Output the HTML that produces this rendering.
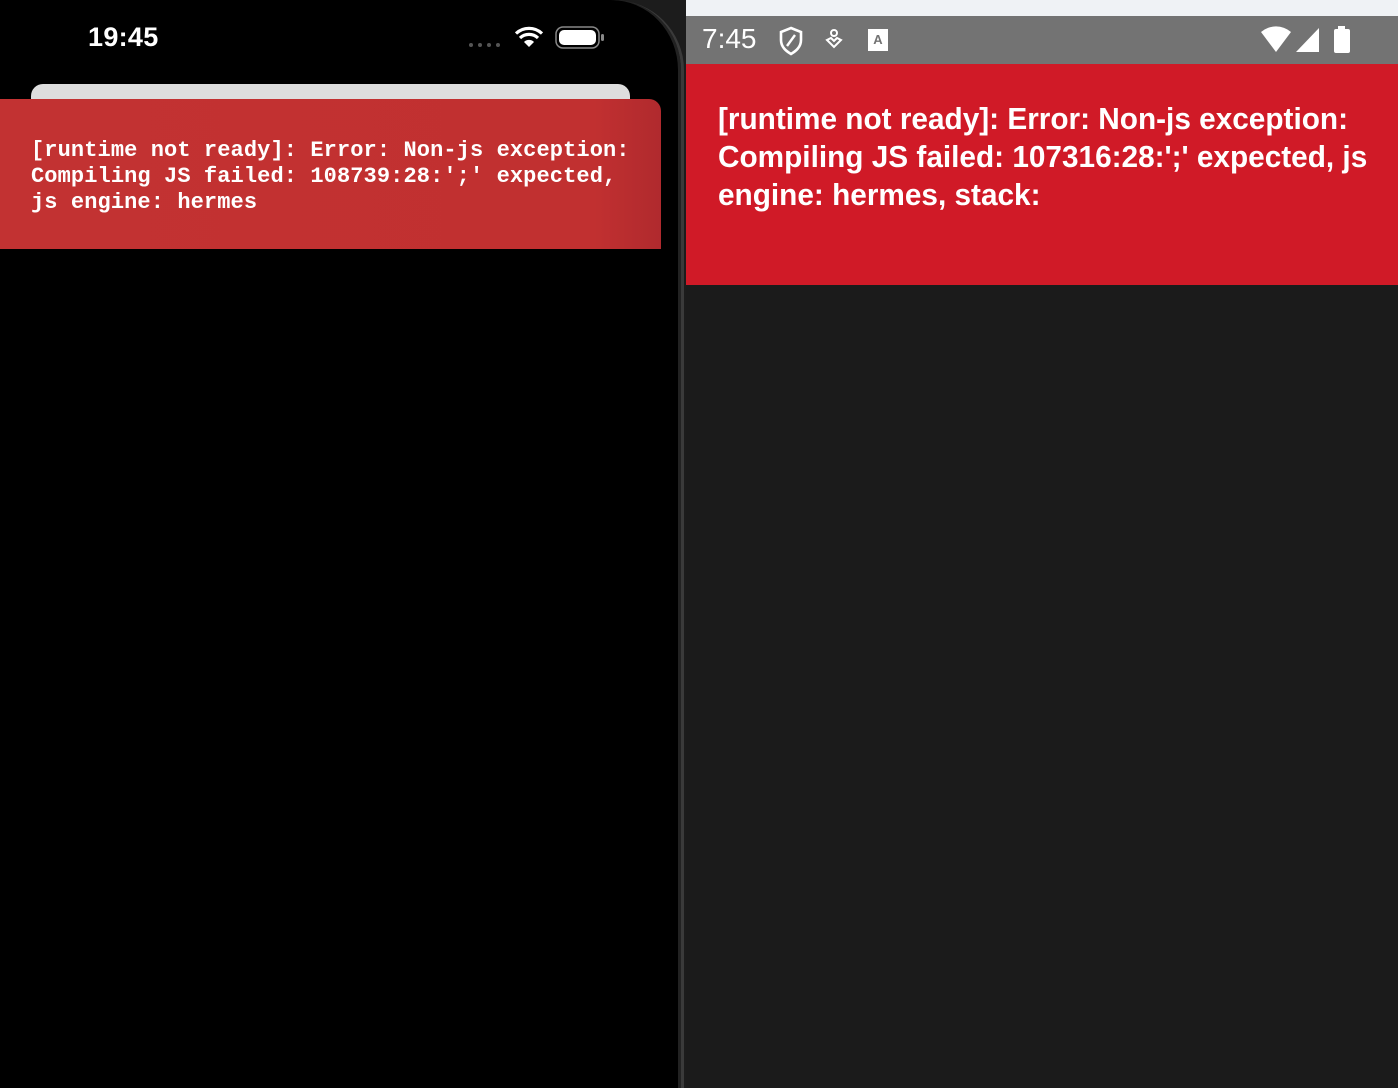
<!DOCTYPE html>
<html><head><meta charset="utf-8"><style>
*{margin:0;padding:0;box-sizing:border-box}
body{width:1398px;height:1088px;overflow:hidden;background:#1b1b1b;position:relative;font-family:"Liberation Sans",sans-serif}
#left{position:absolute;left:0;top:0;width:686px;height:1088px;background:#1c1c1c}
#phone{position:absolute;left:0;top:0;width:684px;height:1088px;background:#000;border-top-right-radius:70px;border-right:3px solid #3a3a3a;box-shadow:inset -3px 0 0 #222}
#time{position:absolute;left:88px;top:22px;color:#fff;font-size:27px;font-weight:600;letter-spacing:0.3px}
#card{position:absolute;left:31px;top:84px;width:599px;height:40px;background:#dedede;border-radius:12px}
#err{position:absolute;left:0;top:99px;width:661px;height:150px;background:linear-gradient(90deg,#c23232,#c13030 90%,#b02a2e);border-radius:0 12px 0 0}
#err pre{position:absolute;left:31px;top:39px;color:#fff;font-family:"Liberation Mono",monospace;font-size:22px;line-height:26px;font-weight:bold;letter-spacing:0.1px}
#r{position:absolute;left:686px;top:0;width:712px;height:1088px;background:#1b1b1b}
#strip{position:absolute;left:0;top:0;width:712px;height:16px;background:#eff2f5}
#sb{position:absolute;left:0;top:16px;width:712px;height:48px;background:#737373}
#rt{position:absolute;left:16px;top:7px;color:#fff;font-size:28px}
#red{position:absolute;left:0;top:64px;width:712px;height:221px;background:#d01a27}
.l{position:absolute;left:32px;color:#fff;font-weight:bold;font-size:31px;white-space:nowrap;transform-origin:0 0;transform:scaleX(0.96)}
</style></head><body>
<div id="left"><div id="phone">
<div id="time">19:45</div>
<svg style="position:absolute;left:468px;top:42px" width="36" height="6"><circle cx="3" cy="3" r="2" fill="#555"/><circle cx="12" cy="3" r="2" fill="#555"/><circle cx="21" cy="3" r="2" fill="#555"/><circle cx="30" cy="3" r="2" fill="#555"/></svg>
<svg style="position:absolute;left:514px;top:26px" width="30" height="22" viewBox="0 0 30 22"><path d="M15 21 L10 16 A7 7 0 0 1 20 16Z" fill="#fff"/><path d="M6 12 A13 13 0 0 1 24 12" stroke="#fff" stroke-width="3.2" fill="none"/><path d="M2 7.5 A19 19 0 0 1 28 7.5" stroke="#fff" stroke-width="3.2" fill="none"/></svg>
<svg style="position:absolute;left:555px;top:26px" width="50" height="24"><rect x="1" y="1" width="43" height="21" rx="7" fill="none" stroke="#888" stroke-width="1.5"/><rect x="4" y="4" width="37" height="15" rx="5" fill="#fff"/><rect x="46" y="8" width="3" height="7" rx="1.5" fill="#888"/></svg>
<div id="card"></div>
<div id="err"><pre>[runtime not ready]: Error: Non-js exception:
Compiling JS failed: 108739:28:';' expected,
js engine: hermes</pre></div>
</div></div>
<div id="r">
<div id="strip"></div>
<div id="sb"><div id="rt">7:45</div>
<svg style="position:absolute;left:92px;top:10px" width="26" height="30" viewBox="0 0 26 30"><path d="M13 2 L23 6 V14 C23 21 18 25 13 28 C8 25 3 21 3 14 V6Z" fill="none" stroke="#fff" stroke-width="2.6"/><path d="M9 20 L17 9" stroke="#fff" stroke-width="2.4"/></svg>
<svg style="position:absolute;left:138px;top:12px" width="20" height="24" viewBox="0 0 20 24"><circle cx="10" cy="5" r="3" fill="none" stroke="#fff" stroke-width="2"/><path d="M3 12 L10 19 L17 12 L13 10 L10 13 L7 10Z" fill="none" stroke="#fff" stroke-width="2"/></svg>
<svg style="position:absolute;left:182px;top:13px" width="20" height="22"><rect x="0" y="0" width="20" height="22" fill="#fff"/><text x="10" y="15" font-size="13" font-weight="bold" text-anchor="middle" fill="#737373" font-family="Liberation Sans">A</text></svg>
<svg style="position:absolute;left:574px;top:10px" width="34" height="28"><path d="M1 6 A23 23 0 0 1 31 6 L16 26Z" fill="#fff"/></svg>
<svg style="position:absolute;left:609px;top:11px" width="26" height="26"><path d="M24 1 V25 H1Z" fill="#fff"/></svg>
<svg style="position:absolute;left:647px;top:10px" width="18" height="28"><rect x="5" y="0" width="7" height="4" fill="#fff"/><rect x="1" y="3" width="16" height="24" rx="2" fill="#fff"/></svg>
</div>
<div id="red">
<div class="l" style="top:37px">[runtime not ready]: Error: Non-js exception:</div>
<div class="l" style="top:75px">Compiling JS failed: 107316:28:';' expected, js</div>
<div class="l" style="top:113px">engine: hermes, stack:</div>
</div>
</div>
</body></html>
